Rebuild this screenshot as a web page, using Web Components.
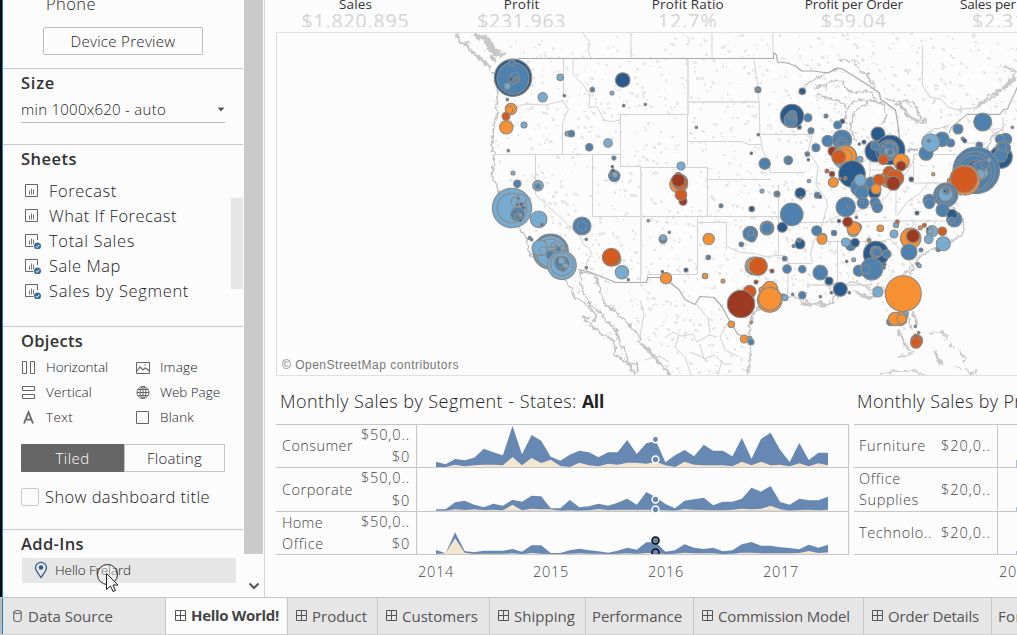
<!DOCTYPE html>
<html lang="en">
<head>
<meta charset="utf-8">
<title>Hello World! dashboard</title>
<style>
html,body{margin:0;height:100%;overflow:hidden;background:#fcfcfc}
body{font-family:"Open Sans","Noto Sans",sans-serif;font-weight:400;color:#333}
</style>
</head>
<body>
<dash-app></dash-app>
<script>
const define = (name, html, setup) => customElements.define(name, class extends HTMLElement {
  connectedCallback() {
    if (this.shadowRoot) return;
    const root = this.attachShadow({mode: 'open'});
    root.innerHTML = typeof html === 'function' ? html(this) : html;
    if (setup) setup(this, root);
  }
});

/* Text run spread or tightened to a given width */
define('fit-text', '<style>:host{display:inline-block;white-space:nowrap;flex:none}</style><slot></slot>', el => {
  const w = +el.getAttribute('w'), n = el.textContent.length;
  if (w) {
    el.style.letterSpacing = ((w - el.getBoundingClientRect().width) / n) + 'px';
  }
});

define('side-section', el => `<style>
:host{display:block;box-sizing:border-box;height:${el.getAttribute('h')}px;border-bottom:1px solid ${el.hasAttribute('last') ? 'transparent' : '#c9c9c9'};overflow:hidden}
h2{margin:0;padding:1px 0 0 18px;font-size:16.500px;line-height:26px;font-weight:600;color:#333;height:26px}
</style>${el.hasAttribute('label') ? `<h2><fit-text w="${el.getAttribute('w')}">${el.getAttribute('label')}</fit-text></h2>` : ''}<slot></slot>`);

define('sheet-item', el => `<style>
:host{display:flex;align-items:center;height:25px;padding-left:22px;font-size:16.500px;font-weight:300;line-height:25px;color:#222}
svg{width:18px;height:17px;margin-right:6px;flex:none}
</style><svg viewBox="0 0 18 17" fill="none"><path d="M${el.hasAttribute('used') ? '9 14.500H.5V2.500H12.500V8' : '.5 2.500h12v12H.5z'}" stroke="#666"/><path d="M4.500 8.500v4M6.500 6.500v6M8.500 7.500v5" stroke="#777"/>${el.hasAttribute('used') ? '<circle cx="12.500" cy="14" r="4.200" fill="#fcfcfc"/><circle cx="12.500" cy="14" r="3.500" fill="#36699c"/><path d="M10.800 14.100l1.300 1.300 2.200-2.700" stroke="#fff"/>' : ''}</svg><fit-text w="${el.getAttribute('w')}">${el.getAttribute('label')}</fit-text>`);

const objIcons = {
  h: '<path d="M1.500 1.500h4v12h-4zM9.500 1.500h4v12h-4z"/>',
  v: '<path d="M1.500 1.500h12v4h-12zM1.500 9.500h12v4h-12z"/>',
  i: '<path d="M1.500 2.500h13v11h-13z"/><path d="M2 11l3-4 3 3 2-2 2 1 2 2M9.500 5h1.500" stroke-width="1.200"/>',
  w: '<circle cx="8" cy="7.500" r="6"/><ellipse cx="8" cy="7.500" rx="2.900" ry="6"/><path d="M2 7.500h12M3 4.500h10M3 10.500h10M8 1.500v12"/>',
  b: '<path d="M1.500 1.500h12v12h-12z"/>',
  t: '<path d="M3 13.500L7.500 2.200 12 13.500M4.800 9.700h5.400" stroke-width="1.800"/>'
};
define('object-item', el => `<style>
:host{display:flex;align-items:center;height:25px;font-size:13.500px;line-height:25px;font-weight:300;color:#222}
svg{width:16px;height:15px;flex:none;margin:-1px 9px 0 0}
</style><svg viewBox="0 0 16 15" fill="none" stroke="#666">${objIcons[el.getAttribute('icon')]}</svg><fit-text w="${el.getAttribute('w')}">${el.getAttribute('label')}</fit-text>`);

define('dash-sidebar', `<style>
:host{display:flex;height:597px;box-sizing:border-box;flex:none;position:relative;border-right:1px solid #d6d6d6;width:265px;background:#fcfcfc;color:#222}
.edge{width:2px;background:#0a0d12;border-right:1px solid #1b7fcc;flex:none}
.body{width:240px;flex:none}
.rail{width:21px;display:flex;flex-direction:column;align-items:center}
.rail i{display:block;width:19px;height:554px;background:#cacaca}
.rail svg{margin-top:28px;width:12px;height:8px}
.phone{padding-left:43px;height:27px;line-height:20px;font-size:16.500px;font-weight:300;margin-top:-6px}
.btn{margin:6px 0 0 40px;width:158px;height:26px;border:1px solid #bbb;border-radius:2px;display:flex;justify-content:center;align-items:center;font-size:15px;font-weight:300;line-height:26px}
.size{margin:0 0 0 18px;width:204px;height:26px;border-bottom:1px solid #bbb;display:flex;align-items:center;justify-content:space-between;font-size:15px;font-weight:300;line-height:24px}
.size svg{width:8px;height:5px}
.sheets{position:relative;padding-top:6px;height:150px}
.thumb{position:absolute;right:0;top:26px;width:12px;height:91px;background:#e6e6e6}
.objects{display:grid;grid-template-columns:114px 1fr;padding:1px 0 0 18px}
.toggle{display:flex;margin:14px 0 0 18px;width:204px;height:28px;font-size:15px;font-weight:300;line-height:26px}
.toggle div{flex:none;box-sizing:border-box;display:flex;align-items:center;justify-content:center;width:103px}
.toggle .on{background:#666;color:#fff;border-radius:1px 0 0 1px}
.toggle .off{border:1px solid #c4c4c4;width:101px}
.check{display:flex;align-items:center;margin:16px 0 0 18px;font-size:16.500px;font-weight:300;height:18px}
.check fit-text{line-height:18px}
.check i{box-sizing:border-box;width:18px;height:18px;border:1px solid #c9c9c9;border-radius:2px;margin-right:6px}
.addin{display:flex;align-items:center;margin:1px 0 0 19px;width:214px;height:25px;background:#e6e6e6;font-size:13.500px;font-weight:300;box-sizing:border-box;padding-left:12px}
.addin svg{width:14px;height:18px;margin:-1px 7px 0 0}
.addin fit-text{margin-top:-1px}
.cursor{position:absolute;left:94px;top:561px;width:28px;height:34px}
</style>
<div class="edge"></div>
<div class="body">
<side-section h="69"><div class="phone"><fit-text w="50">Phone</fit-text></div><div class="btn"><fit-text w="105">Device Preview</fit-text></div></side-section>
<side-section h="76" label="Size" w="34"><div class="size"><fit-text w="145">min 1000x620 - auto</fit-text><svg viewBox="0 0 8 5"><path d="M.5.5h7L4 4.500z" fill="#555"/></svg></div></side-section>
<side-section h="182" label="Sheets" w="56"><div class="sheets">
<sheet-item label="Forecast" w="68"></sheet-item><sheet-item label="What If Forecast" w="128"></sheet-item><sheet-item used label="Total Sales" w="86"></sheet-item><sheet-item used label="Sale Map" w="72"></sheet-item><sheet-item used label="Sales by Segment" w="140"></sheet-item><div class="thumb"></div></div></side-section>
<side-section h="203" label="Objects" w="62"><div class="objects">
<object-item icon="h" label="Horizontal" w="62"></object-item><object-item icon="i" label="Image" w="38"></object-item>
<object-item icon="v" label="Vertical" w="46"></object-item><object-item icon="w" label="Web Page" w="60"></object-item>
<object-item icon="t" label="Text" w="27"></object-item><object-item icon="b" label="Blank" w="34"></object-item></div>
<div class="toggle"><div class="on"><fit-text w="34">Tiled</fit-text></div><div class="off"><fit-text w="55">Floating</fit-text></div></div>
<div class="check"><i></i><fit-text w="165">Show dashboard title</fit-text></div></side-section>
<side-section h="66" label="Add-Ins" w="63" last><div class="addin"><svg viewBox="0 0 14 18"><path d="M7 16.500C4.500 12.500 1.500 10 1.500 6.800a5.500 5.500 0 0 1 11 0C12.500 10 9.500 12.500 7 16.500z" fill="none" stroke="#2f5c88" stroke-width="1.300"/><circle cx="7" cy="6.500" r="2.200" fill="#2f5c88"/></svg><fit-text w="76">Hello Frelard</fit-text></div></side-section>
</div>
<div class="rail"><i></i><svg viewBox="0 0 12 8"><path d="M1.500 1.500L6 6l4.500-4.500" fill="none" stroke="#555" stroke-width="2"/></svg></div>
<svg class="cursor" viewBox="94 561 28 34"><circle cx="107.500" cy="574.500" r="10" fill="#fff" fill-opacity=".35" stroke="#222"/><path d="M106.500 573.500v16l4-3.500 2.500 5.500 2.500-1-2.500-5.500h5z" fill="#fff" stroke="#222"/></svg>`);

define('kpi-strip', () => {
  const k = [['Sales', 33, '$1.820.895', 108], ['Profit', 36, '$231.963', 89], ['Profit Ratio', 72, '12.7%', 60], ['Profit per Order', 98, '$59.04', 66], ['Sales per Customer', 120, '$2.316.66', 96]];
  return `<style>
:host{display:flex;height:27px;overflow:hidden;margin-left:7.500px;width:760px;justify-content:flex-start}
div{width:166.100px;flex:none;display:flex;flex-direction:column;align-items:center}
.l{font-size:13.500px;line-height:14px;height:14px;margin-top:-3px;color:#333}
.v{font-size:19.500px;line-height:19px;height:19px;color:#d4d4d4}
</style>${k.map(a => `<div><fit-text class="l" w="${a[1]}">${a[0]}</fit-text><fit-text class="v" w="${a[3]}">${a[2]}</fit-text></div>`).join('')}`;
});

/* Bubble data: panel origin, then "x y r colour" in thirds of a pixel */
const bubbles = [
 [270,0,'729 233 56 d,729 235 48 m,733 236 16 d,734 228 11 m,738 239 7 m,730 247 6 m,725 188 10 m,712 259 9 l,871 232 10 l,818 292 14 l,712 299 4 m,883 287 4 d,1058 240 22 d,967 269 7 m,1026 279 6 l,1061 317 4 d,723 327 17 o,717 330 11 o,708 349 12 r,709 382 20 o,762 375 9 l,715 452 4 m,892 401 7 l,904 401 10 m,958 442 11 m,1014 429 13 l,1032 474 6 m,1027 500 4 d,1033 528 17 m,1029 518 9 m,1035 524 8 l,1029 512 5 d,729 519 6 l,742 551 11 m,804 557 16 l,803 559 8 m'],
 [270,180,'726 84 59 l,726 84 44 l,743 103 21 m,740 66 17 l,755 56 14 l,745 55 4 d,741 74 4 d,754 73 5 d,760 83 5 d,736 95 5 d,749 106 7 l,742 112 8 m,751 121 5 d,806 118 25 l,816 134 5 m,936 138 27 m,936 138 14 m,949 178 4 m,949 263 4 m,1075 299 4 m,779 174 5 m,785 179 4 m,1036 239 17 l,1024 232 27 r,1056 277 20 l,842 215 53 m,842 217 49 l,842 220 42 l,809 204 23 l,820 212 12 l,850 215 18 l,840 224 12 m,855 203 10 l,866 215 14 l,877 220 10 l,861 230 12 m,902 231 6 d,876 256 43 l,876 253 34 l,876 250 22 m,870 245 16 m,886 258 9 l,875 242 10 l,880 268 7 m,865 208 8 m,850 195 7 l,878 204 7 l'],
 [640,0,'16 313 4 m,354 269 9 m,354 268 4 l,487 274 10 d,456 348 35 d,452 360 20 m,457 346 14 m,457 346 7 m,504 353 12 m,558 348 6 m,478 382 6 d,513 392 9 m,593 375 12 m,607 364 7 d,169 382 4 m,355 404 4 d,334 460 4 d,374 491 17 m,445 481 13 m,443 480 4 d,502 462 7 m,505 479 4 d,528 443 12 m,563 423 17 m,606 419 29 m,606 430 18 m,605 430 10 m,578 454 14 b,614 471 36 l,618 468 31 o,612 471 24 o,596 471 21 r,561 513 6 r,576 522 8 b,580 547 15 o,507 543 5 l,636 522 40 d,600 536 4 r,616 535 5 r,660 478 9 l,672 426 6 d,658 432 4 d,714 402 21 d,707 454 32 d,751 450 44 d,745 450 31 m,748 448 23 m,738 452 15 m,748 442 13 m,753 459 12 l,741 453 8 l,751 457 9 m,705 438 13 m,730 479 15 r,784 485 24 o,783 498 15 b,660 562 28 m,665 578 20 m,661 540 17 l,694 549 18 m,703 577 19 d,745 538 25 o,748 517 18 r,765 535 26 r,743 542 14 r,716 540 17 r,760 550 21 b,708 567 15 o,814 538 7 d,880 523 5 o,858 460 21 m,906 418 22 m,872 428 27 l,866 422 5 m,932 429 12 m,954 387 15 m,1028 366 27 m,968 416 5 m,974 422 6 d,1018 436 10 m,1117 382 4 m,1083 471 34 d,1097 418 18 m,1080 418 14 m,1090 445 22 m,1082 466 20 m,1087 440 12 m,1009 511 70 m,1006 514 59 m,1003 517 51 m,1010 512 32 d,1015 512 28 m,1024 517 20 l,1022 500 18 m,1035 493 13 m,1020 523 14 l,1047 480 6 l,930 543 8 o,974 540 45 o,972 538 40 r,366 573 6 l,411 582 9 m,481 579 16 d,532 586 9 m,123 498 12 l,115 525 8 l,116 552 27 o,120 546 23 r,115 541 20 b,123 584 17 r'],
 [640,180,'129 64 12 b,123 44 17 r,411 42 4 d,483 53 4 m,540 50 5 d,243 77 6 m,335 87 8 d,25 122 4 l,88 157 4 m,69 178 12 m,69 173 9 l,206 177 17 o,205 232 7 m,195 288 8 o,138 270 6 d,249 303 6 o,67 275 4 d,78 295 17 o,331 161 22 m,335 173 13 m,333 159 9 m,304 193 7 m,381 144 21 m,381 144 17 m,455 103 34 m,427 142 15 d,530 152 15 m,548 172 12 l,546 178 15 o,480 192 15 d,476 180 6 m,461 198 5 m,582 159 8 m,597 123 5 d,434 236 7 m,441 267 13 m,487 268 11 m,541 278 22 m,567 303 12 d,601 328 21 d,628 338 4 b,541 350 4 m,574 338 4 d,458 343 4 m,487 346 11 m,429 350 7 l,435 353 9 l,396 273 6 b,342 258 27 l,348 258 27 o,355 259 27 r,348 306 6 b,366 330 9 o,329 335 19 r,303 372 41 b,390 327 23 o,389 360 37 o,390 356 34 o,274 433 10 o,334 427 4 o,313 477 12 o,329 476 7 l,333 486 9 m,617 81 29 m,625 79 4 d,669 69 17 m,667 65 4 d,705 67 15 m,712 82 16 m,640 153 17 l,652 142 13 r,641 145 20 o,623 126 15 b,649 112 4 m,721 145 10 o,632 196 16 m,617 187 13 l,645 188 13 d,687 181 6 o,687 181 3 o,620 244 4 d,641 239 6 l,762 162 12 l,768 135 8 l,772 125 6 r,708 222 38 d,708 216 18 m,704 214 11 m,711 217 13 m,740 222 13 m,733 253 5 d,729 262 7 m,657 272 17 m,695 267 33 m,677 268 13 m,714 336 15 l,831 99 6 d,868 62 19 m,868 71 15 m,917 45 36 m,916 44 28 m,917 43 21 l,919 33 10 m,914 33 5 d,908 90 20 m,943 118 23 m,936 104 16 d,935 120 9 m,812 175 31 o,819 168 20 b,807 216 24 m,841 143 6 o,853 136 6 r,876 154 17 l,870 152 9 l,863 148 4 d,907 154 13 r,866 178 13 l,895 208 7 m,910 191 21 l,843 210 6 m,833 252 5 m,838 257 6 l,790 341 54 o,796 402 9 l,752 425 12 m,780 416 21 o,765 417 20 o,785 417 14 o,826 439 4 m,836 458 4 m,830 482 18 r,828 472 9 r,828 489 16 r']
];
const fills = {d:'#2b5b8d', m:'#4f81af', l:'#77abd1', o:'#f78f33', r:'#d35a20', b:'#9d3a22'};

/* Base map line work, page pixels */
const coast = 'M492 72l4 6 0 6 2 8-2 12 1 8-3 14-1 8-2 12 4 8-2 14-1 6 4 10 3 7 3 16 8 14 9 7 8 12 3 14 12 10 14 8 7 5 6 8 5 11 11 8 10 9 0 9 M582 316l10 11 12 8 8 3 3 8-1 8 9 6 7 5 2 6 3 4 4-4-3-7-7-1-3-10-7-10-2-12-10-10-9-11-9-6-5-11-3-9-1-12 11 1 6 5 4 15 3 10 11 8 12 12 11 11 3 10 10 6 8 14 12 10 M590 319l-8-3';
const gulf = 'M748 376l2-20 2-13-3-14 2-12 6-8 12-12 9-5 6 3 13 3 14 5 10 4 11-4 3-8-8-8 6-3 14 0 10-2 9 5 6 3 6-5 6 4 4 10 4 8 M912 330l-5-16-4-10-3-18 2-11 11-9 8-10 11-7 15-5 11-7 6-6-1-12-8-9-5-7 7-6 4-10 4-9 2-9 16-10 8-20 12-12';
const landPoly = 'M455 33L490 68 497 105 492 145 496 187 515 225 529 243 545 268 575 290 592 314 595 320 602 283 612 308 625 325 640 343 672 376H748L752 343 755 315 780 300 830 305 860 292 880 303 900 330 910 348 918 340 905 285 925 260 960 238 955 215 972 190 1000 165 1017 150V33Z M583 305L603 338 622 364 634 372 625 350 605 325 598 300Z';
const states = ['M583 33l7 10-2 7 3 8','M631 33v25','M712 33v25M773 33v20','M563.500 58.500v37M573 58.500v16l10 10 7 10-1 13 8-1 7 14 10 1 7-2M563.500 101l-1 0 6 8-6 14v31.500M518 106l8-2 20 1 15-4h3','M494 154.500h127M620.500 114.500h67M620.500 114.500v52h20M640.500 167.500h67v49M592.500 154.500v62M535.500 154.500v40l45 42 3 8 6 4 2 5-5 9 0 8M592.500 216.500h187M640.500 167.500v115M754 60l3 20 2 22 1 33M687.500 59v107M688 102.500h71M688 141.500h53l8 3h12M707.500 179.500h63M761.500 134.500h50M760 135l3 16 6 13 1 8M770 172.500h35M778.500 184.500v70M697.500 218v56M697.500 222.500h29v24l14 6 15 1 10 3 14-1M697.500 274.500h-50v4M779 254.500l9 3v25l-1 16M787.500 263.500h24M812.500 263l-2-10 4-13 8-16 4-16M778 222.500h50M826 241.500h60M837.500 240v60M865 240l6 32 0 12M807 284.500h65M826 222l12-6 16-4 17-5 14-9 12-14 10-12 8-14M830 222h28l25-1h70M871 244l19-5 16 17 10 14M812 135l-4 16 10 15-2 19 10 14 2 9M830 132h20M870 154v27M896 175v40M913.500 155v28h39M913.500 154.500h43l8 12-7 20M965 143h15M1003 117v26M978 130l20-1M870 170h30l12-4M897 216l10-14 12-8 10-12M870 156l-8 7-7 15','M641.500 282.500h7','M665 338l8-6 8 4 12-2 4 8 12-7 8 2M640 300l4 14-4 22M679 335l-4 12 10 10 6 18M700 345l4 14 10-4 10 9 8 0M710 333l-2-15-12-14M730 320l-10 16 5 14 14 7M645 360l14-4 10 6M690 352l14 6M722 360l-4 15'];
const borders = 'M518 58.500H773.500V53l3 2 1 7 10 1 8 3 6 5 12 0 14 2 10-5 5 1 30 19 7 5 1 6 15 11 2 12 2 16M578 269.500l10 2 28 11h30l2-5h20l3 6 8 6 6 10 10 5 5-8 14 1 8 9 8 15 8 13 7 2 6 5';
/* Great Lakes and Saint Lawrence, thirds of a pixel from (785,45) */
const lakes = 'M50 135L72 112 100 95 130 82 158 72M86 133l14-10 26-4 18-14 26 2 8 18 6 10 24 8 32-4 22 0M160 44l22 2 28 4 16 30 20 4 6 20 14 12 0 20M262 145l4 18M100 145l20 14 30 6 24 10 10 16M185 240l-6-18 8-28 14-20 26-10 24 6-10 10-16 4-8 10-8 4-12 36 4 34 14 22M240 172l34-6 20 14 8 24 0 20 -12 14M300 160l30 8 22 20 14 24 26 18 14 6M330 168l50 2 14 12 4 24 10 10-4 12-18-6-18-14-14-24-26-8M345 168l8 26M413 226l10-2 0 10-12 2zM424 266l24-12 28-6 16-8M364 318l32-6 30-2M655 66l20 4 18 10-10 18-28 30-40 22-24 20-18 18';
const rivers = 'M412 0V122l22 34 32 6 24 24 26 8 60-6 20-18M500 210h-10M528 182v22';
const border2 = 'M492 264l8-18 46-38h98l12-14 12-2 8-20 12-24 10-24M366 316l30-4';

define('map-view', `<style>
:host{display:block;width:741px;height:344px;border:1px solid #e0e0e0;border-right:0;box-sizing:border-box;position:relative;overflow:hidden}
svg{display:block}
.osm{position:absolute;left:5px;bottom:1px;font:12px/18px "Liberation Sans",sans-serif;color:#777}
</style><svg width="740" height="342" viewBox="277 33 740 342"></svg><fit-text class="osm" w="177">© OpenStreetMap contributors</fit-text>`, (el, root) => {
  let s = 7; const rnd = () => (s = (s * 16807) % 2147483647) / 2147483647;
  let specks = '';
  for (let i = 0; i < 2500; i++) {
    const x = Math.round(455 + rnd() * 562), y = Math.round(33 + rnd() * 342), w = 1 + Math.floor(rnd() * 3), h = 1 + Math.floor(rnd() * 2.5);
    specks += `M${x} ${y}h${w}v${h}h${-w}z`;
    if (rnd() > .6) specks += `M${x + 1} ${y + 1}h${w}v2h${-w}z`;
  }
  const third = (d, c, w) => `<path transform="translate(785 45) scale(.3333)" d="${d}" stroke="${c}" stroke-width="${w}"/>`;
  let out = `<defs><clipPath id="land"><path d="${landPoly}"/></clipPath><filter id="rough" filterUnits="userSpaceOnUse" x="277" y="33" width="740" height="342" color-interpolation-filters="sRGB"><feTurbulence type="fractalNoise" baseFrequency=".22" numOctaves="2" seed="4"/><feDisplacementMap in="SourceGraphic" scale="6" xChannelSelector="R" yChannelSelector="G"/></filter></defs><path d="${specks}" fill="#e7e7e7" clip-path="url(#land)"/>`;
  out += `<g fill="none" stroke-linejoin="round"><path d="${states.join('')}" stroke="#d3d3d3"/><path d="M688 60v55M688 102h72M641 170v105M807 285h60" stroke="#e0e0e0" stroke-width="2"/>`;
  out += `<g filter="url(#rough)"><path d="${coast}" stroke="#c2c2c2" stroke-width="1.600"/><path d="${gulf}" stroke="#c6c6c6" stroke-width="1.600"/>` + third(lakes, '#c4c4c4', 4.8);
  out += '<path d="M640 343l13 12 17 20M750 326l3-12 10-8M800 303l9 2 9-3 5 4 7-2M818 300l8 6M854 291l14 7 7-3M909 273l6-5M958 217l-4 8M975 108l20-12 21-18" stroke="#c8c8c8" stroke-width="2.600"/>';
  out += '<path d="M898 330l4 9 4 8 5 4M913 312l4 12" stroke="#c8c8c8" stroke-width="2.600"/><path d="M897 356l10-1 8-3M880 375l14-4 20 0 9 3M928 334l14-2 5 5-1 4M949 345l5 4M959 350l6 8-2 5M956 365l5 4M965 368l6 6M971 373l7-2" stroke="#c9c9c9" stroke-width="1.600"/><path d="M935 350l2 6 4 8" stroke="#c9c9c9" stroke-width="3.500"/>';
  out += '<path d="M474 35l10 4 8 7 3 6 6 4 5-4M482 35l9 8-1 6 10 3M486 44l10 12" stroke="#c8c8c8" stroke-width="4"/><path d="M456 34l5 8 6 4 7 8 8 5 8 10M463 43l6-1M490 56l7 6" stroke="#c6c6c6" stroke-width="2.500"/></g>';
  out += third(rivers, '#cfcfcf', 3) + third(border2, '#b0b0b0', 3.5) + `<path d="${borders}" stroke="#aaa" stroke-width="1.200"/></g>`;
  for (const [ox, oy, list] of bubbles) for (const b of list.split(',')) {
    const [x, y, r, c] = b.split(' ');
    out += `<circle cx="${(ox + x / 3).toFixed(1)}" cy="${(oy + y / 3).toFixed(1)}" r="${(r / 3).toFixed(1)}" fill="${fills[c]}" stroke="#8a8a88" stroke-width="1.100"/>`;
  }
  root.querySelector('svg').innerHTML = out;
});

/* Area series, y in thirds of a pixel below y=380 */
const series = [
 [261,'245 253 237 241 233 206 217 226 138 223 165 182 230 242 224 212 217 232 217 217 180 222 190 183 247 226 210 229 194 212 212 229 174 236 177 158 210 246 189 240 218 218','261 261 254 259 256 254 254 256 231 256 234 249 239 258 261 248 256 259 251 254 248 248 251 245 256 261 245 254 256 256 256 259 245 256 245 256 254 259 250 259 250 256'],
 [392,'388 388 367 362 374 382 371 377 359 365 347 349 385 385 360 382 379 371 377 368 356 374 336 352 372 385 362 358 353 376 365 365 356 323 335 318 366 374 356 361 361 350','392 392 388 390 388 390 389 391 374 391 386 388 388 392 391 392 391 387 390 389 389 389 389 390 391 392 387 389 390 391 391 389 386 388 386 377 388 392 390 389 391 389'],
 [522,'510 520 457 513 517 512 512 512 507 515 496 496 519 519 511 506 511 514 518 512 503 509 487 487 515 511 493 503 507 503 514 511 493 486 497 497 502 504 508 494 503 494','522 520 475 518 522 521 521 521 520 522 519 521 522 522 521 520 521 521 522 521 520 521 519 520 522 521 518 520 520 520 522 521 518 518 520 520 520 520 519 513 519 517']
];
define('segment-chart', `<style>
:host{display:block;width:573px;flex:none}
h3{margin:0;height:48px;padding-left:4px;font-size:18px;line-height:50px;font-weight:300;color:#222;display:flex}
b{font-weight:700;font-size:17.500px}
.grid{display:grid;grid-template-columns:80px 60px 433px;grid-template-rows:43px 44px 43px;border-top:1px solid #c6c6c6;box-sizing:border-box;font-size:14.500px;font-weight:300;color:#444}
.n,.a{border-bottom:1px solid #c6c6c6;box-sizing:border-box}
.n{display:flex;flex-direction:column;justify-content:center;align-items:flex-start;padding:0 0 1px 6px;line-height:21px}
.a{display:flex;flex-direction:column;justify-content:flex-start;align-items:flex-end;padding:0 6px 0 0;line-height:20px;white-space:nowrap}
.a fit-text+fit-text{margin-top:2px}
.a.mid fit-text+fit-text{margin-top:3px}
.n.two{padding-bottom:0}
.plot{grid-column:3;grid-row:1/4;border:1px solid #c6c6c6;border-top:0;box-sizing:border-box;height:130px}
.plot svg{display:block}
.axis{display:flex;padding:7px 0 0 142px;font-size:14.500px;font-weight:300;color:#444;line-height:20px}
.axis fit-text{margin-right:79px}
</style><h3><fit-text w="302">Monthly Sales by Segment - States:&nbsp;</fit-text><b><fit-text w="22">All</fit-text></b></h3>
<div class="grid">
<div class="n"><fit-text w="71">Consumer</fit-text></div><div class="a"><fit-text w="49">$50,0..</fit-text><fit-text w="18">$0</fit-text></div>
<div class="n two"><fit-text w="71">Corporate</fit-text></div><div class="a mid"><fit-text w="49">$50,0..</fit-text><fit-text w="18">$0</fit-text></div>
<div class="n two"><fit-text w="41">Home</fit-text><fit-text w="42">Office</fit-text></div><div class="a"><fit-text w="49">$50,0..</fit-text><fit-text w="18">$0</fit-text></div>
<div class="plot"><svg width="431" height="129" viewBox="417 425 431 129"></svg></div></div>
<div class="axis"><fit-text w="36">2014</fit-text><fit-text w="36">2015</fit-text><fit-text w="36">2016</fit-text><fit-text w="36">2017</fit-text></div>`, (el, root) => {
  let out = '';
  for (const [base, top, low] of series) {
    const by = 380 + base / 3;
    const area = (v, f) => `<path fill="${f}" d="M436 ${by}L${v.split(' ').map((y, i) => (436 + i * 9.56).toFixed(1) + ' ' + (380 + y / 3).toFixed(1)).join(' ')} 828 ${by}z"/>`;
    out += area(top, '#6788b3') + area(low, '#f3e5d0');
  }
  out += '<path d="M417 467.500h431M417 511.500h431" stroke="#c6c6c6"/>';
  out += '<g fill="#6788b3" stroke="#fff" stroke-width="1.500"><circle cx="655.500" cy="439.500" r="3.200"/><circle cx="655.500" cy="459.500" r="3.400"/><circle cx="655.500" cy="499.500" r="3.400"/><circle cx="655.500" cy="509.500" r="3.400"/></g><g fill="#6788b3" stroke="#111" stroke-width="1.600"><circle cx="655.500" cy="540.500" r="3.500"/><circle cx="655.500" cy="552.500" r="3.500"/></g>';
  root.querySelector('svg').innerHTML = out;
});

define('product-chart', `<style>
:host{display:block;width:163px;margin-left:5px;overflow:hidden;flex:none}
h3{margin:0;height:48px;padding-left:3px;font-size:18px;line-height:50px;font-weight:300;color:#222;display:flex}
.grid{display:grid;grid-template-columns:143px 20px;grid-template-rows:43px 44px 43px;border-top:1px solid #c6c6c6;font-size:14.500px;font-weight:300;color:#444}
.r,.p{border-bottom:1px solid #c6c6c6;box-sizing:border-box}
.r{display:flex;align-items:center;justify-content:space-between;padding:0 6px 1px 5px;line-height:21px;white-space:nowrap}
.n{display:flex;flex-direction:column;align-items:flex-start}
.p{border-left:1px solid #c6c6c6;display:flex;align-items:flex-end;padding-left:18px}
.p i{width:1px;height:7px;background:#a9bfda}
.axis{padding:7px 0 0 145px;font-size:14.500px;font-weight:300;color:#444;line-height:20px}
</style><h3><fit-text w="213">Monthly Sales by Product</fit-text></h3>
<div class="grid">
<div class="r"><span class="n"><fit-text w="67">Furniture</fit-text></span><fit-text w="50">$20,0..</fit-text></div><div class="p"><i></i></div>
<div class="r"><span class="n"><fit-text w="42">Office</fit-text><fit-text w="60">Supplies</fit-text></span><fit-text w="50">$20,0..</fit-text></div><div class="p"><i style="height:4px"></i></div>
<div class="r"><span class="n"><fit-text w="73">Technolo..</fit-text></span><fit-text w="50">$20,0..</fit-text></div><div class="p"><i style="height:3px"></i></div>
</div><div class="axis"><fit-text w="36">2014</fit-text></div>`);

define('sheet-tab', el => `<style>
:host{display:flex;align-items:center;box-sizing:border-box;flex:none;width:${el.getAttribute('width')}px;height:36px;border-right:1px solid #c6c6c6;padding-left:${el.getAttribute('pad') || 9}px;font-size:15px;color:#555;background:#e6e6e6;line-height:36px;font-weight:400}
:host([active]){background:#fcfcfc;font-weight:700;color:#444}
svg{width:11px;height:11px;margin:-1px 5px 0 0;flex:none}
:host([active]) fit-text{margin-top:-2px}
.db{width:9px;height:12px;margin-right:6px}
</style>${el.getAttribute('icon') === 'db' ? '<svg class="db" viewBox="0 0 9 12" fill="none" stroke="#555"><ellipse cx="4.500" cy="2" rx="3.700" ry="1.500"/><path d="M.8 2v8c0 2 7.400 2 7.400 0V2"/></svg>' : el.getAttribute('icon') === 'none' ? '' : '<svg viewBox="0 0 11 11" fill="none" stroke="#555"><path d="M.5.5h10v10H.5zM5.500.5v10M.5 5.500h10"/></svg>'}<fit-text w="${el.getAttribute('w')}">${el.getAttribute('label')}</fit-text>`);

define('tab-bar', `<style>
:host{display:flex;height:38px;box-sizing:border-box;border-top:1px solid #c6c6c6;border-bottom:1px solid #d0d0d0;overflow:hidden;background:#e6e6e6;width:1017px}
.edge{width:2px;border-right:1px solid #1b7fcc;background:#bbb;flex:none}
</style><div class="edge"></div>
<sheet-tab icon="db" pad="10" width="163" w="85" label="Data Source"></sheet-tab>
<sheet-tab active width="122" w="88" label="Hello World!"></sheet-tab>
<sheet-tab pad="8" width="90" w="55" label="Product"></sheet-tab>
<sheet-tab pad="8" width="112" w="76" label="Customers"></sheet-tab>
<sheet-tab pad="8" width="96" w="61" label="Shipping"></sheet-tab>
<sheet-tab pad="6" icon="none" width="108" w="90" label="Performance"></sheet-tab>
<sheet-tab pad="8" width="170" w="132" label="Commission Model"></sheet-tab>
<sheet-tab pad="8" width="128" w="91" label="Order Details"></sheet-tab>
<sheet-tab pad="6" icon="none" width="90" w="62" label="Forecast"></sheet-tab>`);

define('dash-app', `<style>
:host{display:block;width:1017px;height:635px;overflow:hidden}
.top{display:flex;height:597px}
main{width:752px;overflow:hidden;box-sizing:border-box}
map-view{margin:5px 0 0 11px}
.charts{display:flex;padding-left:11px}
</style><div class="top"><dash-sidebar></dash-sidebar><main><kpi-strip></kpi-strip><map-view></map-view><div class="charts"><segment-chart></segment-chart><product-chart></product-chart></div></main></div><tab-bar></tab-bar>`);
</script>
</body>
</html>
